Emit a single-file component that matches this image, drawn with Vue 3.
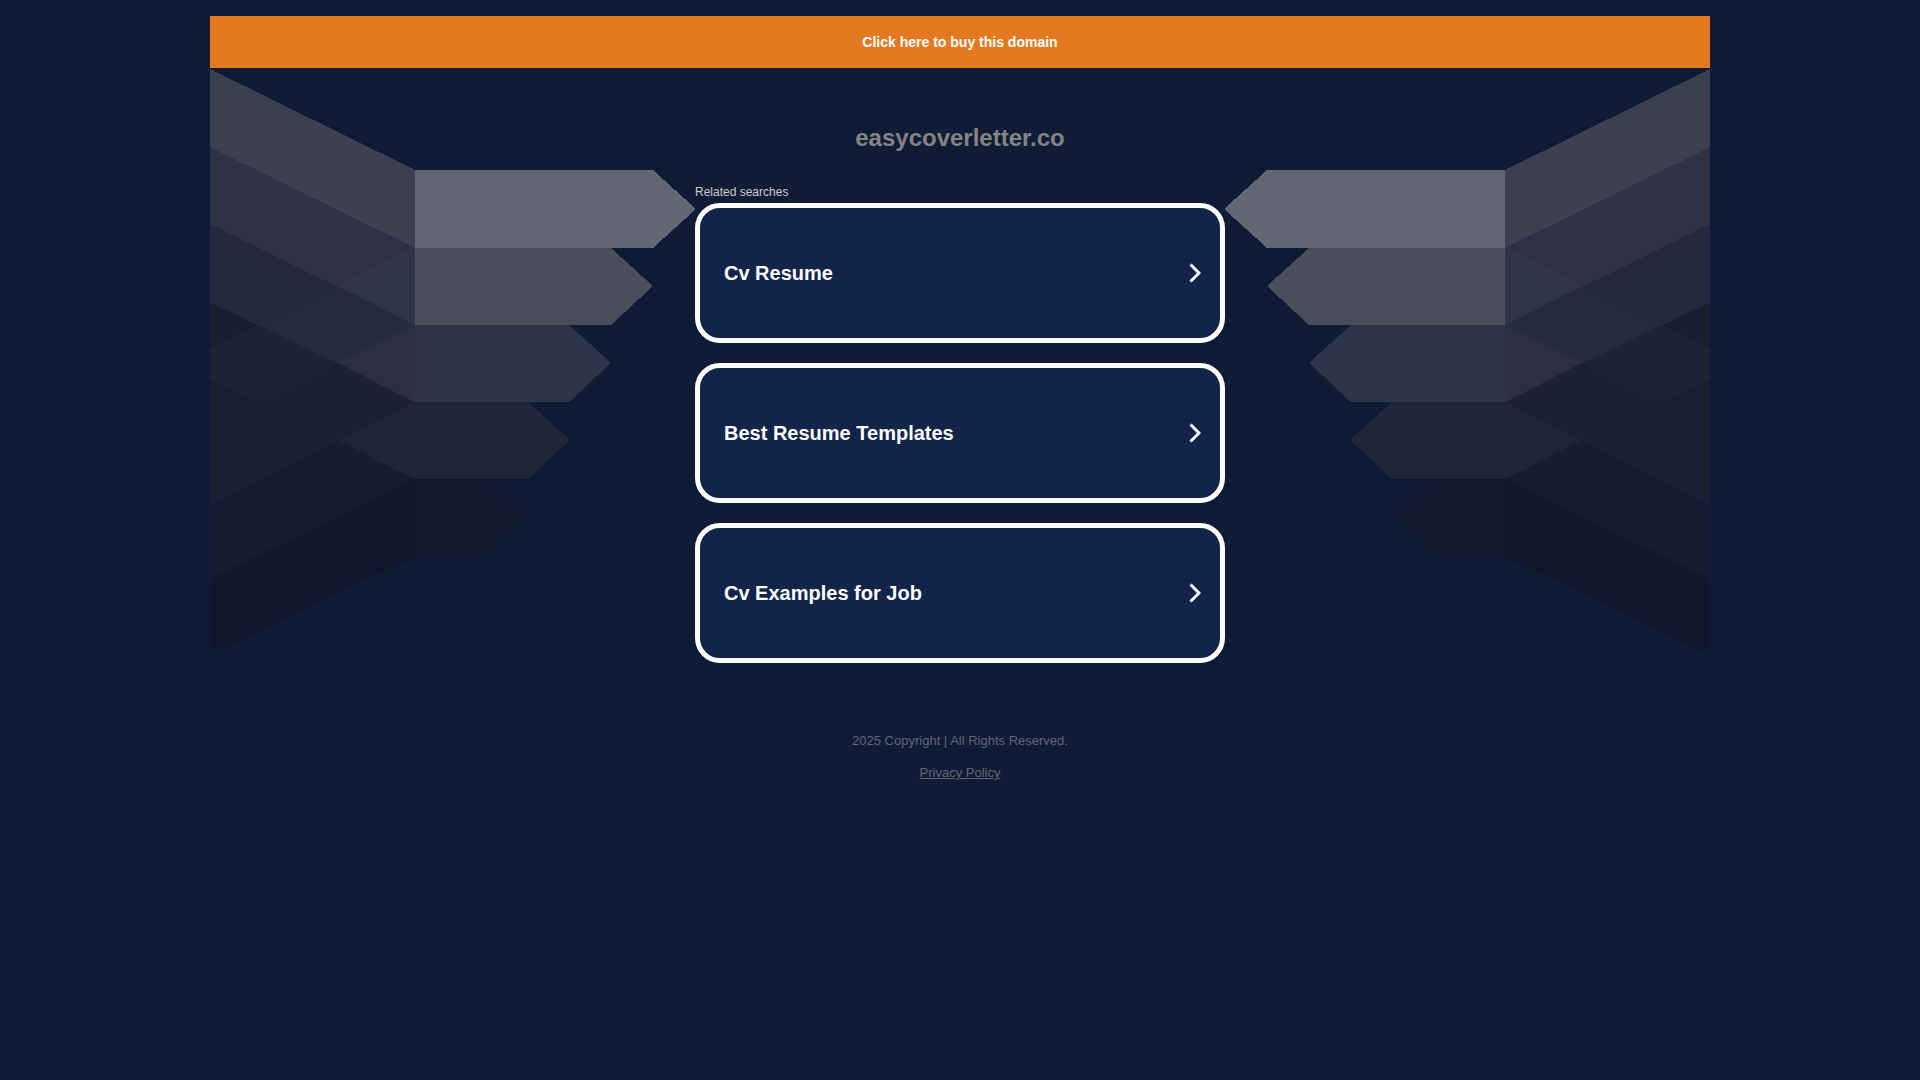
<script setup>
const searches = ['Cv Resume', 'Best Resume Templates', 'Cv Examples for Job']

const shapes = [
  { fill: '#3c4051', points: '0,1 205,102 205,180 0,79' },
  { fill: '#2e3244', points: '0,79 205,180 205,257 0,156' },
  { fill: '#313548', points: '205,180 205,257 128,218' },
  { fill: '#25293d', points: '0,156 205,257 205,334 0,234' },
  { fill: '#272b3e', points: '128,218 205,257 205,334 50,257' },
  { fill: '#2c3042', points: '205,257 205,334 128,295' },
  { fill: '#1a1f32', points: '0,234 205,334 205,411 0,310' },
  { fill: '#1e2336', points: '50,257 205,334 205,411 0,310 0,281' },
  { fill: '#1d2134', points: '128,295 205,334 205,411 50,334' },
  { fill: '#1f2437', points: '205,334 205,411 128,372' },
  { fill: '#1b2032', points: '0,310 128,372 0,436' },
  { fill: '#181c31', points: '128,372 205,411 0,511 0,436' },
  { fill: '#12172c', points: '205,411 205,489 0,587 0,511' },
  { fill: '#636673', points: '205,102 443,102 486,141 443,180 205,180' },
  { fill: '#4a4d5c', points: '205,180 401,180 443,218 401,257 205,257' },
  { fill: '#303447', points: '205,257 359,257 401,295 359,334 205,334' },
  { fill: '#212538', points: '205,334 318,334 360,372 318,411 205,411' },
  { fill: '#151a2e', points: '205,411 277,411 319,450 276,489 205,489' },
]
</script>

<template>
  <div class="page">
    <a class="buy" href="#">Click here to buy this domain</a>
    <main class="stage">
      <svg
        v-for="side in ['left', 'right']"
        :key="side"
        class="wing"
        :class="side"
        viewBox="0 0 486 588"
        shape-rendering="crispEdges"
        aria-hidden="true"
      >
        <polygon v-for="s in shapes" :key="s.points" :points="s.points" :fill="s.fill" />
      </svg>
      <div class="content">
        <h1>easycoverletter.co</h1>
        <p class="label">Related searches</p>
        <nav class="cards">
          <a v-for="name in searches" :key="name" class="card" href="#">
            <span>{{ name }}</span>
            <svg class="chevron" viewBox="0 0 12 20" aria-hidden="true">
              <path d="M1.5 1.5 10 10l-8.5 8.5" fill="none" stroke="#fff" stroke-width="3" />
            </svg>
          </a>
        </nav>
      </div>
    </main>
    <footer>
      <p>2025 Copyright | All Rights Reserved.</p>
      <a href="#">Privacy Policy</a>
    </footer>
  </div>
</template>

<style>
body {
  background: #101c35;
}
</style>

<style scoped>
.page {
  max-width: 1500px;
  margin: 0 auto;
  padding-top: 16px;
  font-family: "Liberation Sans", Arial, sans-serif;
}
.buy {
  display: block;
  background: #e57921;
  color: #fff;
  font-size: 14px;
  font-weight: bold;
  line-height: 20px;
  padding: 16px;
  text-align: center;
  text-decoration: none;
}
.stage {
  position: relative;
}
.wing {
  position: absolute;
  top: 0;
  width: 486px;
  height: 588px;
}
.left {
  left: 0;
}
.right {
  right: 0;
  transform: scaleX(-1);
}
.content {
  position: relative;
  max-width: 530px;
  margin: 0 auto;
}
h1 {
  margin: 0;
  padding-top: 56px;
  color: #848484;
  font-size: 24px;
  line-height: 28px;
  text-align: center;
}
.label {
  margin: 0;
  padding: 32px 0 3px;
  color: #ccc;
  font-size: 12px;
  line-height: 16px;
}
.cards {
  display: flex;
  flex-direction: column;
  gap: 20px;
}
.card {
  display: flex;
  align-items: center;
  justify-content: space-between;
  box-sizing: border-box;
  min-height: 140px;
  padding: 0 19px 0 24px;
  border: 5px solid #fff;
  border-radius: 25px;
  background: #11254b;
  color: #fff;
  font-size: 20px;
  font-weight: bold;
  text-decoration: none;
}
.chevron {
  width: 12px;
  height: 20px;
}
footer {
  padding-top: 68px;
  color: #626574;
  font-size: 13px;
  line-height: 20px;
  text-align: center;
}
footer p {
  margin: 0 0 12px;
}
footer a {
  color: inherit;
}
</style>
